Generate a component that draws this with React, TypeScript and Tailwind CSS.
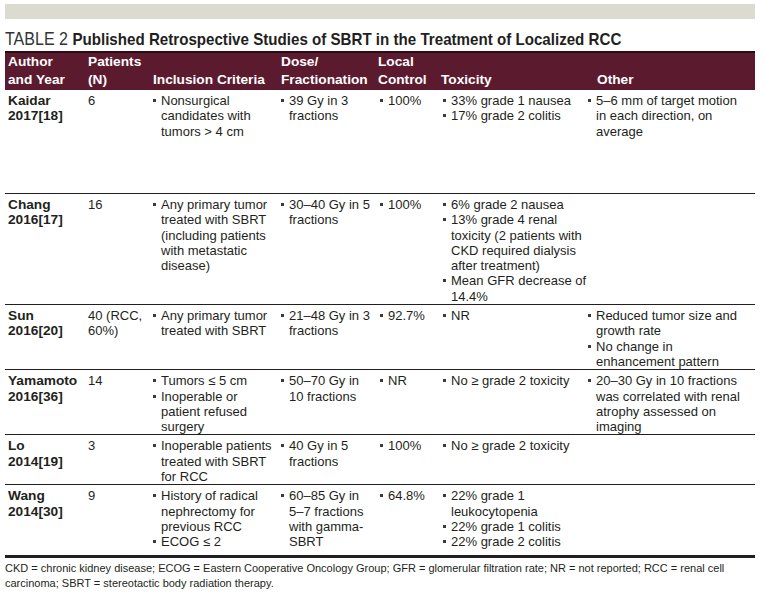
import React from "react";

type Study = {
  author: string;
  year: string;
  patients: string;
  inclusion: string[];
  dose: string[];
  control: string;
  toxicity: string[];
  other: string[];
  minH?: string;
};

const studies: Study[] = [
  {
    author: "Kaidar",
    year: "2017[18]",
    patients: "6",
    inclusion: ["Nonsurgical candidates with tumors > 4 cm"],
    dose: ["39 Gy in 3 fractions"],
    control: "100%",
    toxicity: ["33% grade 1 nausea", "17% grade 2 colitis"],
    other: ["5–6 mm of target motion in each direction, on average"],
    minH: "min-h-[104px]",
  },
  {
    author: "Chang",
    year: "2016[17]",
    patients: "16",
    inclusion: ["Any primary tumor treated with SBRT (including patients with metastatic disease)"],
    dose: ["30–40 Gy in 5 fractions"],
    control: "100%",
    toxicity: [
      "6% grade 2 nausea",
      "13% grade 4 renal toxicity (2 patients with CKD required dialysis after treatment)",
      "Mean GFR decrease of 14.4%",
    ],
    other: [],
  },
  {
    author: "Sun",
    year: "2016[20]",
    patients: "40 (RCC, 60%)",
    inclusion: ["Any primary tumor treated with SBRT"],
    dose: ["21–48 Gy in 3 fractions"],
    control: "92.7%",
    toxicity: ["NR"],
    other: ["Reduced tumor size and growth rate", "No change in enhancement pattern"],
  },
  {
    author: "Yamamoto",
    year: "2016[36]",
    patients: "14",
    inclusion: ["Tumors ≤ 5 cm", "Inoperable or patient refused surgery"],
    dose: ["50–70 Gy in 10 fractions"],
    control: "NR",
    toxicity: ["No ≥ grade 2 toxicity"],
    other: ["20–30 Gy in 10 fractions was correlated with renal atrophy assessed on imaging"],
  },
  {
    author: "Lo",
    year: "2014[19]",
    patients: "3",
    inclusion: ["Inoperable patients treated with SBRT for RCC"],
    dose: ["40 Gy in 5 fractions"],
    control: "100%",
    toxicity: ["No ≥ grade 2 toxicity"],
    other: [],
  },
  {
    author: "Wang",
    year: "2014[30]",
    patients: "9",
    inclusion: ["History of radical nephrectomy for previous RCC", "ECOG ≤ 2"],
    dose: ["60–85 Gy in 5–7 fractions with gamma-SBRT"],
    control: "64.8%",
    toxicity: ["22% grade 1 leukocytopenia", "22% grade 1 colitis", "22% grade 2 colitis"],
    other: [],
  },
];

const cols = "grid grid-cols-[80px_65px_128px_99px_63px_145px_1fr]";

function Bullets({ items, cls = "" }: { items: string[]; cls?: string }) {
  return (
    <ul className={`pl-[3px] ${cls}`}>
      {items.map((t) => (
        <li key={t} className="flex">
          <span className="mt-[6px] mr-[5px] h-[3px] w-[3px] shrink-0 bg-[#3a3a3a]" />
          <span>{t}</span>
        </li>
      ))}
    </ul>
  );
}

export default function App() {
  return (
    <div className="min-h-[594px] bg-white font-['Liberation_Sans',Arial,sans-serif] text-[#231f20]">
      <div className="ml-[5px] w-[750px] pt-[4px]">
        <div className="h-[15px] bg-[#dcdbd0]" />

        <h1 className="mt-[11px] mb-[2px] origin-left scale-x-[0.89] whitespace-nowrap text-[17px] leading-[19px]">
          <span className="text-[18px] font-light text-[#333]">TABLE 2 </span>
          <span className="font-bold">Published Retrospective Studies of SBRT in the Treatment of Localized RCC</span>
        </h1>

        {/* header */}
        <div className={`${cols} items-end border-t-2 border-[#2a0b14] bg-[#5b1a2e] pb-[1px] text-[13.7px] font-bold leading-[18px] text-white`}>
          <div className="pl-[3px]">Author<br />and Year</div>
          <div className="pl-[3px]">Patients<br />(N)</div>
          <div className="pl-[3px]">Inclusion Criteria</div>
          <div className="pl-[3px]">Dose/<br />Fractionation</div>
          <div className="pl-[1px]">Local<br />Control</div>
          <div className="pl-[1px]">Toxicity</div>
          <div className="pl-[12px]">Other</div>
        </div>

        {studies.map((s, i) => {
          const last = i === studies.length - 1;
          return (
            <div
              key={s.author}
              className={`${cols} ${s.minH ?? ""} ${last ? "border-b-[3px] pb-[5px]" : "border-b pb-0"} border-[#231f20] pt-[3px] text-[13px] leading-[15.3px]`}
            >
              <div className="pl-[3px] text-[13.7px] font-bold">
                <div>{s.author}</div>
                <div>{s.year}</div>
              </div>
              <div className="pl-[3px] pr-[4px]">{s.patients}</div>
              <Bullets items={s.inclusion} />
              <Bullets items={s.dose} cls="pr-[3px]" />
              <Bullets items={[s.control]} />
              <Bullets items={s.toxicity} cls="mr-[-8px]" />
              <Bullets items={s.other} cls="pr-[6px]" />
            </div>
          );
        })}

        <p className="border-b border-[#231f20] pt-[3px] pb-[3px] text-[11px] leading-[15px]">
          CKD = chronic kidney disease; ECOG = Eastern Cooperative Oncology Group; GFR = glomerular filtration rate; NR = not reported; RCC = renal cell carcinoma; SBRT = stereotactic body radiation therapy.
        </p>
      </div>
    </div>
  );
}
